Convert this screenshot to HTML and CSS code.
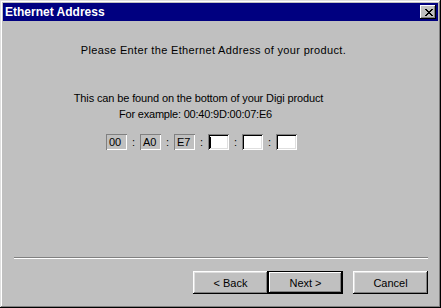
FILE: index.html
```html
<!DOCTYPE html>
<html>
<head>
<meta charset="utf-8">
<link rel="stylesheet" href="styles.css">
</head>
<body>
<div class="window">
  <div class="titlebar">
    <span class="title">Ethernet Address</span>
    <span class="close"><svg width="8" height="7" viewBox="0 0 8 7"><path d="M0 0h2v1h1v1h2v-1h1v-1h2v1h-1v1h-1v1h-1v1h1v1h1v1h1v1h-2v-1h-1v-1h-2v1h-1v1h-2v-1h1v-1h1v-1h1v-1h-1v-1h-1v-1h-1z" fill="#000"/></svg></span>
  </div>
  <div class="content">
    <p class="msg first">Please Enter the Ethernet Address of your product.</p>
    <p class="msg second">This can be found on the bottom of your Digi product</p>
    <p class="msg third">For example: 00:40:9D:00:07:E6</p>
    <div class="fields">
      <span class="box disabled">00</span><span class="colon">:</span>
      <span class="box disabled">A0</span><span class="colon">:</span>
      <span class="box disabled">E7</span><span class="colon">:</span>
      <span class="box edit"><span class="caret"></span></span><span class="colon">:</span>
      <span class="box edit"></span><span class="colon">:</span>
      <span class="box edit"></span>
    </div>
    <div class="spacer"></div>
    <div class="separator"></div>
    <div class="buttons">
      <button class="btn">&lt; Back</button>
      <button class="btn default">Next &gt;</button>
      <button class="btn cancel">Cancel</button>
    </div>
  </div>
</div>
</body>
</html>
```
FILE: styles.css
```css
html, body {
  margin: 0;
  padding: 0;
  background: #c0c0c0;
}
.window {
  width: 441px;
  height: 308px;
  box-sizing: border-box;
  padding: 3px;
  background: #c0c0c0;
  box-shadow: inset -1px -1px #000, inset 1px 1px #dfdfdf, inset -2px -2px #808080, inset 2px 2px #fff;
  display: flex;
  flex-direction: column;
  font-family: "Liberation Sans", Arial, sans-serif;
  font-size: 11px;
  color: #000;
}
.titlebar {
  height: 18px;
  background: #000080;
  display: flex;
  align-items: center;
  justify-content: space-between;
  padding: 0 2px 0 2px;
}
.title {
  color: #fff;
  font-family: "Liberation Sans", Arial, sans-serif;
  font-weight: bold;
  font-size: 12px;
}
.close {
  width: 16px;
  height: 14px;
  box-sizing: border-box;
  background: #c0c0c0;
  box-shadow: inset -1px -1px #000, inset 1px 1px #fff, inset -2px -2px #808080;
  display: flex;
  align-items: center;
  justify-content: center;
  padding-left: 1px;
}
.close svg { display: block; }
.content {
  flex: 1;
  display: flex;
  flex-direction: column;
}
.msg {
  margin: 0;
  text-align: center;
  white-space: nowrap;
}
.first {
  margin-top: 23px;
  line-height: 13px;
  letter-spacing: 0.34px;
  margin-left: -14px;
}
.second {
  margin-top: 33px;
  line-height: 16px;
  letter-spacing: -0.13px;
  margin-right: 44px;
}
.third {
  line-height: 16px;
  letter-spacing: -0.2px;
  margin-right: 50px;
}
.fields {
  margin-top: 12px;
  display: flex;
  align-items: center;
  padding-left: 103px;
}
.box {
  width: 21px;
  height: 16px;
  box-sizing: border-box;
  display: flex;
  align-items: center;
  padding-left: 3px;
  line-height: 12px;
}
.box.disabled {
  background: #c0c0c0;
  box-shadow: inset 1px 1px #808080, inset -1px -1px #fff;
}
.box.edit {
  background: #fff;
  box-shadow: inset 1px 1px #808080, inset -1px -1px #fff, inset 2px 2px #000, inset -2px -2px #dfdfdf;
}
.caret {
  width: 1px;
  height: 11px;
  background: #000;
  margin-left: -1px;
}
.colon {
  width: 13px;
  text-align: center;
}
.spacer { flex: 1; }
.separator {
  margin: 0 10px 0 11px;
  height: 0;
  border-top: 1px solid #808080;
  border-bottom: 1px solid #fff;
}
.buttons {
  display: flex;
  justify-content: flex-end;
  padding: 12px 10px 11px 0;
}
.btn {
  width: 75px;
  height: 23px;
  margin: 0;
  padding: 0;
  border: none;
  background: #c0c0c0;
  font-family: "Liberation Sans", Arial, sans-serif;
  font-size: 11px;
  color: #000;
  box-shadow: inset -1px -1px #000, inset 1px 1px #fff, inset -2px -2px #808080, inset 2px 2px #dfdfdf;
}
.btn.default {
  box-shadow: inset 0 0 0 1px #000, inset -2px -2px #000, inset 2px 2px #fff, inset -3px -3px #808080;
}
.btn.cancel { margin-left: 10px; }
```
